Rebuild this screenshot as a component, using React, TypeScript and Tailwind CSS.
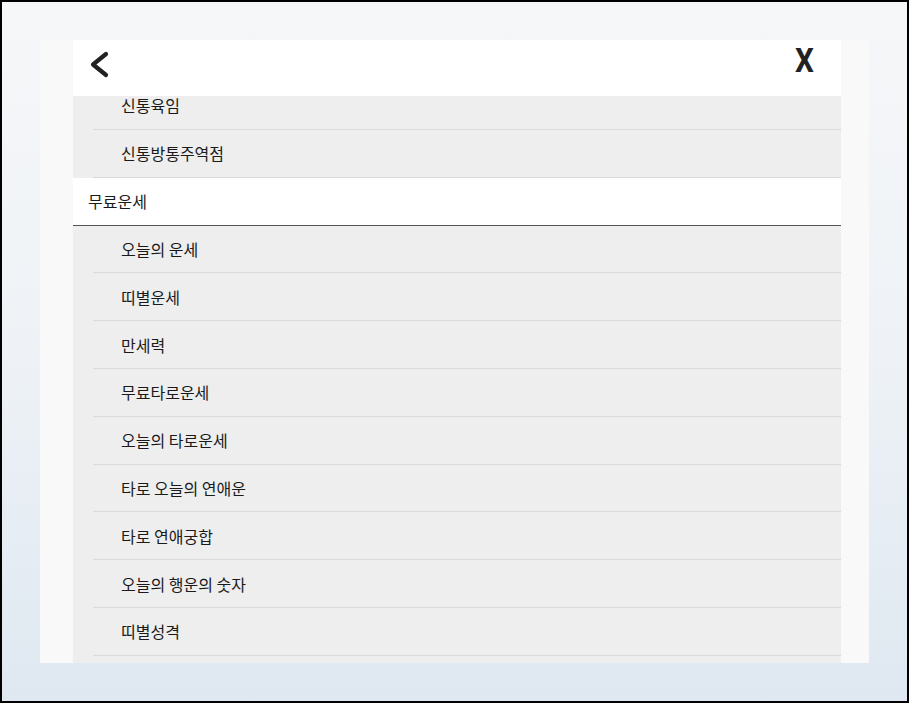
import React from "react";

const before = ["신통육임", "신통방통주역점"];
const after = [
  "오늘의 운세",
  "띠별운세",
  "만세력",
  "무료타로운세",
  "오늘의 타로운세",
  "타로 오늘의 연애운",
  "타로 연애궁합",
  "오늘의 행운의 숫자",
  "띠별성격",
  "띠별궁합",
];

function SubRow({ label }: { label: string }) {
  return (
    <div className="ml-[20px] h-[47.8px] shrink-0 border-b border-[#dadada] flex items-center pl-[28px] text-[16px] text-[#1a1a1a]">
      {label}
    </div>
  );
}

export default function App() {
  return (
    <div
      className="w-[909px] h-[703px] border-2 border-black bg-gradient-to-b from-[#f6f7f9] via-[#eef2f6] to-[#dfe8f1] overflow-hidden"
      style={{ fontFamily: '"Noto Sans CJK KR", "Noto Sans", sans-serif' }}
    >
      <div className="mt-[38px] ml-[38px] w-[829px] h-[623px] bg-[#f9f9f9] px-[33px] pr-[28px] flex flex-col overflow-hidden">
        <div className="h-[56px] shrink-0 bg-white flex items-start justify-between">
          <svg width="40" height="50" viewBox="0 0 40 50" className="mt-[10px] ml-[12px]">
            <path d="M21 4 L8 14.5 L21 25" fill="none" stroke="#222" strokeWidth="4.2" strokeLinecap="round" strokeLinejoin="round" />
          </svg>
          <span
            className="mr-[26px] mt-[1px] text-[33px] font-bold text-[#222] leading-[40px] scale-x-90 inline-block"
            style={{ fontFamily: "Roboto, sans-serif" }}
          >
            X
          </span>
        </div>
        <div className="flex-1 overflow-hidden bg-[#eeeeee]">
          <div className="-mt-[14px] flex flex-col">
            {before.map((l) => (
              <SubRow key={l} label={l} />
            ))}
            <div className="h-[48px] shrink-0 bg-white border-b border-[#555] flex items-center pl-[15px] text-[16px] text-[#1a1a1a]">
              무료운세
            </div>
            {after.map((l) => (
              <SubRow key={l} label={l} />
            ))}
          </div>
        </div>
      </div>
    </div>
  );
}
